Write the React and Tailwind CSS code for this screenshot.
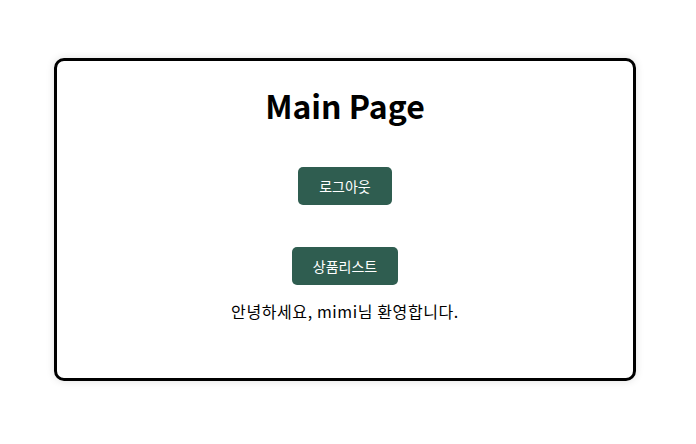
import React from 'react';

const font = { fontFamily: '"Noto Sans CJK KR", "Noto Sans", sans-serif' };

export default function App() {
  return (
    <div className="w-[696px] h-[444px] bg-white pt-[58px] pl-[54px]" style={font}>
      <div className="w-[582px] h-[323px] border-[3px] border-black rounded-[10px] shadow-[0_0_8px_rgba(0,0,0,0.12)] flex flex-col items-center">
        <h1 className="mt-[22px] text-[32px] leading-[44px] font-bold text-black">Main Page</h1>
        <button className="mt-[40px] w-[94px] h-[38px] rounded-[5px] bg-[#2f5d50] text-white text-[14px]">
          로그아웃
        </button>
        <button className="mt-[42px] w-[106px] h-[38px] rounded-[5px] bg-[#2f5d50] text-white text-[14px]">
          상품리스트
        </button>
        <p className="mt-[14px] text-[16px] leading-[24px] tracking-[0.6px] text-black">안녕하세요, mimi님 환영합니다.</p>
      </div>
    </div>
  );
}
